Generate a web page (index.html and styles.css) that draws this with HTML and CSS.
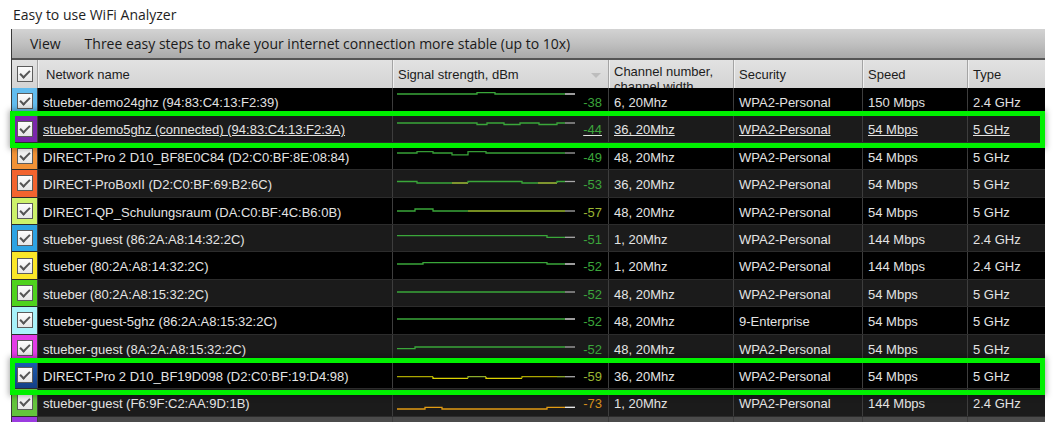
FILE: index.html
```html
<!DOCTYPE html>
<html>
<head>
  <title>WiFi Analyzer</title>
  <link rel="stylesheet" href="styles.css">
</head>
<body>
  <div class="caption">Easy to use WiFi Analyzer</div>

  <div class="window">
    <div class="menubar">
      <span>View</span>
      <span>Three easy steps to make your internet connection more stable (up to 10x)</span>
    </div>

    <div class="grid head">
      <div class="pick"><span class="box"></span></div>
      <div class="cell">Network name</div>
      <div class="cell sorted">Signal strength, dBm<span class="arrow"></span></div>
      <div class="cell wrap">Channel number, channel width</div>
      <div class="cell">Security</div>
      <div class="cell">Speed</div>
      <div class="cell">Type</div>
    </div>

    <!-- 1 -->
    <div class="grid row">
      <div class="pick sw-sky"><span class="box"></span></div>
      <div class="cell">stueber-demo24ghz (94:83:C4:13:F2:39)</div>
      <div class="cell signal">
        <svg class="spark" viewBox="0 0 180 26">
          <polyline class="ln-g" points="0,6 80,6 80,4.7 98,4.7 98,6 168,6"/>
          <polyline class="ln-w" points="168,6 178,6"/>
        </svg>
        <span class="dbm good">-38</span>
      </div>
      <div class="cell">6, 20Mhz</div>
      <div class="cell">WPA2-Personal</div>
      <div class="cell">150 Mbps</div>
      <div class="cell">2.4 GHz</div>
    </div>

    <!-- 2 -->
    <div class="grid row alt connected">
      <div class="pick sw-purple"><span class="box"></span></div>
      <div class="cell">stueber-demo5ghz (connected) (94:83:C4:13:F2:3A)</div>
      <div class="cell signal">
        <svg class="spark" viewBox="0 0 180 26">
          <polyline class="ln-g" points="0,8 80,8 80,9.5 90,9.5 90,8 107,8 107,9.5 123,9.5 123,8 142,8 142,9.5 160,9.5 160,8 168,8"/>
          <polyline class="ln-s" points="168,8 178,8"/>
        </svg>
        <span class="dbm good">-44</span>
      </div>
      <div class="cell">36, 20Mhz</div>
      <div class="cell">WPA2-Personal</div>
      <div class="cell">54 Mbps</div>
      <div class="cell">5 GHz</div>
    </div>

    <!-- 3 -->
    <div class="grid row">
      <div class="pick sw-orange"><span class="box"></span></div>
      <div class="cell">DIRECT-Pro 2 D10_BF8E0C84 (D2:C0:BF:8E:08:84)</div>
      <div class="cell signal">
        <svg class="spark" viewBox="0 0 180 26">
          <polyline class="ln-g" points="0,10 20,10 20,8.6 36,8.6 36,10 55,10 55,11.8 71,11.8 71,8.6 89,8.6 89,10 168,10"/>
          <polyline class="ln-s" points="168,10 178,10"/>
        </svg>
        <span class="dbm good">-49</span>
      </div>
      <div class="cell">48, 20Mhz</div>
      <div class="cell">WPA2-Personal</div>
      <div class="cell">54 Mbps</div>
      <div class="cell">5 GHz</div>
    </div>

    <!-- 4 -->
    <div class="grid row alt">
      <div class="pick sw-red"><span class="box"></span></div>
      <div class="cell">DIRECT-ProBoxII (D2:C0:BF:69:B2:6C)</div>
      <div class="cell signal">
        <svg class="spark" viewBox="0 0 180 26">
          <polyline class="ln-g" points="0,11.5 20,11.5 20,13 55,13"/>
          <polyline class="ln-y" points="55,13 71,13"/>
          <polyline class="ln-g" points="71,13 71,11.5 125,11.5 125,13 141,13"/>
          <polyline class="ln-y" points="141,13 160,13"/>
          <polyline class="ln-g" points="160,13 160,11.5 168,11.5"/>
          <polyline class="ln-s" points="168,11.5 178,11.5"/>
        </svg>
        <span class="dbm good">-53</span>
      </div>
      <div class="cell">36, 20Mhz</div>
      <div class="cell">WPA2-Personal</div>
      <div class="cell">54 Mbps</div>
      <div class="cell">5 GHz</div>
    </div>

    <!-- 5 -->
    <div class="grid row">
      <div class="pick sw-lime"><span class="box"></span></div>
      <div class="cell">DIRECT-QP_Schulungsraum (DA:C0:BF:4C:B6:0B)</div>
      <div class="cell signal">
        <svg class="spark" viewBox="0 0 180 26">
          <polyline class="ln-g" points="0,13 18,13 18,11 36,11 36,13 71,13"/>
          <polyline class="ln-yg" points="71,13 168,13"/>
          <polyline class="ln-s" points="168,13 178,13"/>
        </svg>
        <span class="dbm fair">-57</span>
      </div>
      <div class="cell">48, 20Mhz</div>
      <div class="cell">WPA2-Personal</div>
      <div class="cell">54 Mbps</div>
      <div class="cell">5 GHz</div>
    </div>

    <!-- 6 -->
    <div class="grid row alt">
      <div class="pick sw-blue"><span class="box"></span></div>
      <div class="cell">stueber-guest (86:2A:A8:14:32:2C)</div>
      <div class="cell signal">
        <svg class="spark" viewBox="0 0 180 26">
          <polyline class="ln-g" points="0,10.7 150,10.7 150,12.3 168,12.3"/>
          <polyline class="ln-s" points="168,12.3 178,12.3"/>
        </svg>
        <span class="dbm good">-51</span>
      </div>
      <div class="cell">1, 20Mhz</div>
      <div class="cell">WPA2-Personal</div>
      <div class="cell">144 Mbps</div>
      <div class="cell">2.4 GHz</div>
    </div>

    <!-- 7 -->
    <div class="grid row">
      <div class="pick sw-yellow"><span class="box"></span></div>
      <div class="cell">stueber (80:2A:A8:14:32:2C)</div>
      <div class="cell signal">
        <svg class="spark" viewBox="0 0 180 26">
          <polyline class="ln-g" points="0,12 26,12 26,10.6 150,10.6 150,12 168,12"/>
          <polyline class="ln-w" points="168,12 178,12"/>
        </svg>
        <span class="dbm good">-52</span>
      </div>
      <div class="cell">1, 20Mhz</div>
      <div class="cell">WPA2-Personal</div>
      <div class="cell">144 Mbps</div>
      <div class="cell">2.4 GHz</div>
    </div>

    <!-- 8 -->
    <div class="grid row alt">
      <div class="pick sw-green"><span class="box"></span></div>
      <div class="cell">stueber (80:2A:A8:15:32:2C)</div>
      <div class="cell signal">
        <svg class="spark" viewBox="0 0 180 26">
          <polyline class="ln-g" points="0,12 168,12"/>
          <polyline class="ln-s" points="168,12 178,12"/>
        </svg>
        <span class="dbm good">-52</span>
      </div>
      <div class="cell">48, 20Mhz</div>
      <div class="cell">WPA2-Personal</div>
      <div class="cell">54 Mbps</div>
      <div class="cell">5 GHz</div>
    </div>

    <!-- 9 -->
    <div class="grid row">
      <div class="pick sw-cyan"><span class="box"></span></div>
      <div class="cell">stueber-guest-5ghz (86:2A:A8:15:32:2C)</div>
      <div class="cell signal">
        <svg class="spark" viewBox="0 0 180 26">
          <polyline class="ln-g" points="0,12 168,12"/>
          <polyline class="ln-w" points="168,12 178,12"/>
        </svg>
        <span class="dbm good">-52</span>
      </div>
      <div class="cell">48, 20Mhz</div>
      <div class="cell">9-Enterprise</div>
      <div class="cell">54 Mbps</div>
      <div class="cell">5 GHz</div>
    </div>

    <!-- 10 -->
    <div class="grid row alt">
      <div class="pick sw-magenta"><span class="box"></span></div>
      <div class="cell">stueber-guest (8A:2A:A8:15:32:2C)</div>
      <div class="cell signal">
        <svg class="spark" viewBox="0 0 180 26">
          <polyline class="ln-g" points="0,13.7 18,13.7 18,12 168,12"/>
          <polyline class="ln-s" points="168,12 178,12"/>
        </svg>
        <span class="dbm good">-52</span>
      </div>
      <div class="cell">48, 20Mhz</div>
      <div class="cell">WPA2-Personal</div>
      <div class="cell">54 Mbps</div>
      <div class="cell">5 GHz</div>
    </div>

    <!-- 11 -->
    <div class="grid row">
      <div class="pick sw-navy"><span class="box"></span></div>
      <div class="cell">DIRECT-Pro 2 D10_BF19D098 (D2:C0:BF:19:D4:98)</div>
      <div class="cell signal">
        <svg class="spark" viewBox="0 0 180 26">
          <polyline class="ln-o" points="0,14.7 36,14.7"/>
          <polyline class="ln-yl" points="36,14.7 36,16.3 71,16.3"/>
          <polyline class="ln-og" points="71,16.3 71,14.7 89,14.7"/>
          <polyline class="ln-yl" points="89,14.7 89,16.3 125,16.3"/>
          <polyline class="ln-o" points="125,16.3 125,14.7 160,14.7"/>
          <polyline class="ln-og" points="160,14.7 168,14.7"/>
          <polyline class="ln-s" points="168,14.7 178,14.7"/>
        </svg>
        <span class="dbm fair">-59</span>
      </div>
      <div class="cell">36, 20Mhz</div>
      <div class="cell">WPA2-Personal</div>
      <div class="cell">54 Mbps</div>
      <div class="cell">5 GHz</div>
    </div>

    <!-- 12 -->
    <div class="grid row alt">
      <div class="pick sw-grass"><span class="box"></span></div>
      <div class="cell">stueber-guest (F6:9F:C2:AA:9D:1B)</div>
      <div class="cell signal">
        <svg class="spark" viewBox="0 0 180 26">
          <polyline class="ln-or" points="0,20 28,20 28,18.3 45,18.3 45,20 150,20 150,18.3 168,18.3"/>
          <polyline class="ln-w" points="168,18.3 178,18.3"/>
        </svg>
        <span class="dbm weak">-73</span>
      </div>
      <div class="cell">1, 20Mhz</div>
      <div class="cell">WPA2-Personal</div>
      <div class="cell">144 Mbps</div>
      <div class="cell">2.4 GHz</div>
    </div>

    <!-- 13, cut off -->
    <div class="grid row last">
      <div class="pick sw-violet"><span class="box"></span></div>
      <div class="cell"></div>
      <div class="cell"></div>
      <div class="cell"></div>
      <div class="cell"></div>
      <div class="cell"></div>
      <div class="cell"></div>
    </div>
  </div>

  <!-- highlight frames drawn over the list -->
  <div class="frame frame-top"></div>
  <div class="frame frame-bottom"></div>
</body>
</html>
```

FILE: styles.css
```css
body {
  margin: 0; background: #fff;
  font-family: "Liberation Sans", Arial, sans-serif;
  position: relative; overflow: hidden;
}
.caption {
  height: 29px; padding-left: 13px;
  font: 14px/30px "Open Sans", "Noto Sans", sans-serif;
  color: #1e1e1e;
}
.window {
  margin-left: 11px; width: 1033px;
  border-left: 1px solid #3a3a3a;
  background: #000;
}
.menubar {
  height: 29px; display: flex; align-items: center; gap: 24px;
  padding-left: 18px;
  background: linear-gradient(#d3d3d3, #c0c0c0 50%, #a9a9a9);
  border-bottom: 2px solid #555;
  font: 14px "Open Sans", "Noto Sans", sans-serif;
  color: #1a1a1a;
}
.grid {
  display: grid;
  grid-template-columns: 25px 355px 216px 125px 129px 105px 77px;
  box-sizing: border-box;
}
.cell {
  padding-left: 5px; overflow: hidden; white-space: nowrap;
  font-size: 13px;
}

/* column header */
.head {
  height: 28px;
  background: linear-gradient(#e2e2e2, #d4d4d4);
}
.head .cell {
  border-left: 1px solid #a4a4a4;
  box-shadow: inset 1px 0 #f0f0f0;
  line-height: 30px; color: #1c1c1c;
}
.head .cell:nth-child(2) { padding-left: 8px; }
.head .wrap {
  white-space: normal; line-height: 15px; padding-top: 4px;
  box-sizing: border-box; height: 28px;
}
.sorted { position: relative; }
.arrow {
  position: absolute; right: 7px; top: 13px;
  border-left: 5px solid transparent; border-right: 5px solid transparent;
  border-top: 5px solid #bdbdbd;
}

/* data rows */
.row {
  height: 27.4px;
  border-bottom: 1px solid #2c2c2c;
  background: #000; color: #e4e4e4;
}
.row.alt { background: #1b1b1b; }
.row.last { background: #4b4b4b; }
.row .cell {
  border-left: 1px solid #3d3d3d;
  line-height: 29px;
}
.connected .cell { text-decoration: underline; }

.pick {
  display: flex; align-items: center; justify-content: center;
}
.box {
  width: 14px; height: 14px; position: relative;
  border: 1px solid #5c5c5c;
  background: linear-gradient(#fdfdfd, #e6e6e6);
}
.box::after {
  content: ""; position: absolute;
  left: 4px; top: 1px; width: 4px; height: 8px;
  border: solid #555; border-width: 0 2px 2px 0;
  transform: rotate(45deg);
}

.sw-sky { background: #62bcee; }
.sw-purple { background: #7b27ab; }
.sw-orange { background: #f29236; }
.sw-red { background: #f2642f; }
.sw-lime { background: #cdf26a; }
.sw-blue { background: #2ea3e2; }
.sw-yellow { background: #fbe728; }
.sw-green { background: #4fd21e; }
.sw-cyan { background: #a8f2fa; }
.sw-magenta { background: #e23ce6; }
.sw-navy { background: linear-gradient(#1d5cb0, #143f86); }
.sw-grass { background: #63c43c; }
.sw-violet { background: #9b3be0; }

.signal {
  display: flex; padding-left: 4px; padding-right: 6px;
}
.spark {
  width: 180px; height: 26px; flex: none; overflow: visible;
}
.spark polyline { fill: none; stroke-width: 1.3; }
.ln-g { stroke: #3aa73a; }
.ln-y { stroke: #b6d83c; }
.ln-yg { stroke: #9dbd2c; }
.ln-o { stroke: #aaa600; }
.ln-yl { stroke: #dcd300; }
.ln-og { stroke: #8caa2c; }
.ln-or { stroke: #e29c14; }
.ln-s { stroke: #a9a9a9; }
.ln-w { stroke: #f2f2f2; }

.dbm { margin-left: auto; }
.good { color: #3ba63b; }
.fair { color: #9ab632; }
.weak { color: #d6901c; }

/* green highlight frames */
.frame {
  position: absolute; left: 10px; width: 1035px; height: 37px;
  box-sizing: border-box;
  border: 5px solid #00f000;
  box-shadow: 0 0 6px 1px rgba(0, 0, 0, 0.35);
}
.frame-top { top: 111px; }
.frame-bottom { top: 358px; }
```
